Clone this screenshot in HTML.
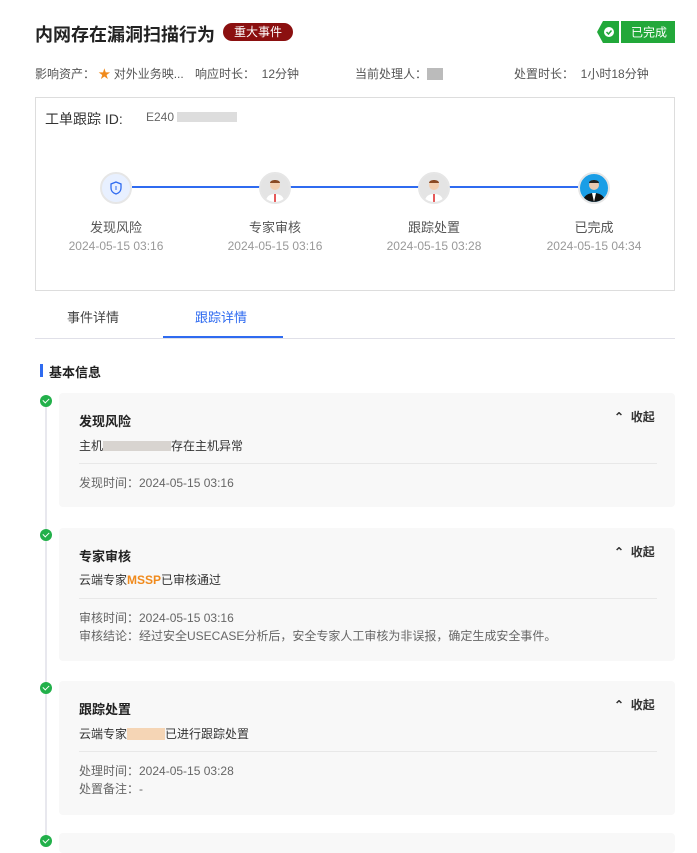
<!DOCTYPE html>
<html><head><meta charset="utf-8"><style>
*{margin:0;padding:0;box-sizing:border-box}
body{width:697px;height:847px;overflow:hidden;background:#fff;font-family:"Liberation Sans","Noto Sans CJK SC",sans-serif;position:relative;color:#333}
.a{position:absolute;white-space:nowrap}
.title{left:35px;top:21px;font-size:18px;font-weight:bold;color:#222}
.tag{left:223px;top:23px;background:#8b1010;color:#fff;font-size:12px;padding:0 11px;height:18px;line-height:18px;border-radius:9px}
.meta{top:65px;font-size:12px;color:#555}
.box{left:35px;top:97px;width:640px;height:194px;border:1px solid #ddd}
.dot{width:32px;height:32px;border-radius:50%;border:2px solid #e6e6e6;background:#ddd;overflow:hidden}
.lbl{font-size:13px;color:#555;transform:translateX(-50%)}
.dt{font-size:12px;color:#999;transform:translateX(-50%)}
.card{left:59px;width:616px;background:#f8f8f8;border-radius:4px}
.ct{font-size:13px;font-weight:bold;color:#222}
.cs{font-size:12px;color:#333}
.cm{font-size:12px;color:#666;line-height:18px}
.hr{height:1px;background:#e8e8e8}
.ck{width:12px;height:12px;border-radius:50%;background:#22b04a;left:40px}
.ck:after{content:"";position:absolute;left:3px;top:3px;width:5px;height:3px;border-left:1.5px solid #fff;border-bottom:1.5px solid #fff;transform:rotate(-45deg)}
.fold{font-size:12px;font-weight:bold;color:#333}
</style></head><body>
<div class="a title">内网存在漏洞扫描行为</div>
<div class="a tag">重大事件</div>
<div class="a" style="left:597px;top:21px;width:78px;height:22px;">
<svg width="78" height="22"><polygon points="0,11 6,0 22,0 22,22 6,22" fill="#22a83a"/><rect x="24" y="0" width="54" height="22" fill="#22a83a"/><circle cx="12" cy="11" r="5" fill="#fff"/><path d="M9.5 11l2 2 3-3.5" stroke="#22a83a" stroke-width="1.5" fill="none"/><text x="34" y="15.5" font-size="12" fill="#fff" font-family="Liberation Sans,Noto Sans CJK SC,sans-serif">已完成</text></svg></div>
<div class="a meta" style="left:35px">影响资产： <span style="color:#f08a1c">★</span> 对外业务映...</div>
<div class="a meta" style="left:195px">响应时长：&nbsp; 12分钟</div>
<div class="a meta" style="left:355px">当前处理人：<span style="display:inline-block;width:16px;height:12px;background:#bbb;vertical-align:-2px"></span></div>
<div class="a meta" style="left:514px">处置时长：&nbsp; 1小时18分钟</div>
<div class="a box"></div>
<div class="a" style="left:45px;top:109px;font-size:14px;color:#333">工单跟踪 ID:</div>
<div class="a" style="left:146px;top:110px;font-size:12px;color:#666">E240<span style="display:inline-block;width:60px;height:10px;background:#ddd;vertical-align:-1px;margin-left:3px"></span></div>
<div class="a" style="left:132px;top:186px;width:446px;height:2px;background:#2f6bf0"></div>
<div class="a dot" style="left:100px;top:172px;background:#e8f0ff"><svg width="28" height="28"><path d="M14 8l5 2v4c0 3-2 5-5 6-3-1-5-3-5-6v-4z" fill="none" stroke="#2f6bf0" stroke-width="1.3"/><path d="M14 12v4" stroke="#2f6bf0"/></svg></div>
<div class="a dot" style="left:259px;top:172px;background:#e4e4e4"><svg width="28" height="28"><circle cx="14" cy="11" r="5" fill="#f3cfb0"/><path d="M9 9c0-4 10-4 10 0" fill="#8a4a24"/><path d="M5 28c0-6 4-8 9-8s9 2 9 8z" fill="#fff"/><path d="M14 20v8" stroke="#d22" stroke-width="1.5"/></svg></div>
<div class="a dot" style="left:418px;top:172px;background:#e4e4e4"><svg width="28" height="28"><circle cx="14" cy="11" r="5" fill="#f3cfb0"/><path d="M9 9c0-4 10-4 10 0" fill="#8a4a24"/><path d="M5 28c0-6 4-8 9-8s9 2 9 8z" fill="#fff"/><path d="M14 20v8" stroke="#d22" stroke-width="1.5"/></svg></div>
<div class="a dot" style="left:578px;top:172px;background:#1a9ee6"><svg width="28" height="28"><circle cx="14" cy="11" r="5" fill="#e8c8b0"/><path d="M9 9c0-4 10-4 10 0" fill="#222"/><path d="M3 28c0-6 5-9 11-9s11 3 11 9z" fill="#111"/><path d="M12 19l2 9 2-9z" fill="#fff"/></svg></div>
<div class="a lbl" style="left:116px;top:217px">发现风险</div>
<div class="a lbl" style="left:275px;top:217px">专家审核</div>
<div class="a lbl" style="left:434px;top:217px">跟踪处置</div>
<div class="a lbl" style="left:594px;top:217px">已完成</div>
<div class="a dt" style="left:116px;top:239px">2024-05-15 03:16</div>
<div class="a dt" style="left:275px;top:239px">2024-05-15 03:16</div>
<div class="a dt" style="left:434px;top:239px">2024-05-15 03:28</div>
<div class="a dt" style="left:594px;top:239px">2024-05-15 04:34</div>
<div class="a" style="left:67px;top:307px;font-size:13px;color:#444">事件详情</div>
<div class="a" style="left:195px;top:307px;font-size:13px;color:#2f6bf0">跟踪详情</div>
<div class="a" style="left:35px;top:338px;width:640px;height:1px;background:#e0e0e8"></div>
<div class="a" style="left:163px;top:336px;width:120px;height:2px;background:#2f6bf0"></div>
<div class="a" style="left:40px;top:364px;width:3px;height:13px;background:#2f6bf0"></div>
<div class="a" style="left:49px;top:362px;font-size:13px;font-weight:bold;color:#222">基本信息</div>
<div class="a" style="left:45px;top:400px;width:2px;height:447px;background:#e8e8ee"></div>
<div class="a ck" style="top:395px"></div>
<div class="a ck" style="top:529px"></div>
<div class="a ck" style="top:682px"></div>
<div class="a ck" style="top:835px"></div>

<div class="a card" style="top:393px;height:114px">
<div class="a ct" style="left:20px;top:18px">发现风险</div>
<div class="a fold" style="left:555px;top:15px">⌃&nbsp; 收起</div>
<div class="a cs" style="left:20px;top:44px">主机<span style="display:inline-block;width:68px;height:10px;background:#d8d4d0;vertical-align:-1px"></span>存在主机异常</div>
<div class="a hr" style="left:20px;top:70px;width:578px"></div>
<div class="a cm" style="left:20px;top:81px">发现时间：2024-05-15 03:16</div>
</div>
<div class="a card" style="top:528px;height:133px">
<div class="a ct" style="left:20px;top:18px">专家审核</div>
<div class="a fold" style="left:555px;top:15px">⌃&nbsp; 收起</div>
<div class="a cs" style="left:20px;top:43px">云端专家<b style="color:#f08a1c">MSSP</b>已审核通过</div>
<div class="a hr" style="left:20px;top:70px;width:578px"></div>
<div class="a cm" style="left:20px;top:81px">审核时间：2024-05-15 03:16<br>审核结论：经过安全USECASE分析后，安全专家人工审核为非误报，确定生成安全事件。</div>
</div>
<div class="a card" style="top:681px;height:134px">
<div class="a ct" style="left:20px;top:18px">跟踪处置</div>
<div class="a fold" style="left:555px;top:15px">⌃&nbsp; 收起</div>
<div class="a cs" style="left:20px;top:44px">云端专家<span style="display:inline-block;width:38px;height:12px;background:#f5d5b5;vertical-align:-2px"></span>已进行跟踪处置</div>
<div class="a hr" style="left:20px;top:70px;width:578px"></div>
<div class="a cm" style="left:20px;top:81px">处理时间：2024-05-15 03:28<br>处置备注：-</div>
</div>
<div class="a card" style="top:833px;height:20px"></div>
</body></html>
